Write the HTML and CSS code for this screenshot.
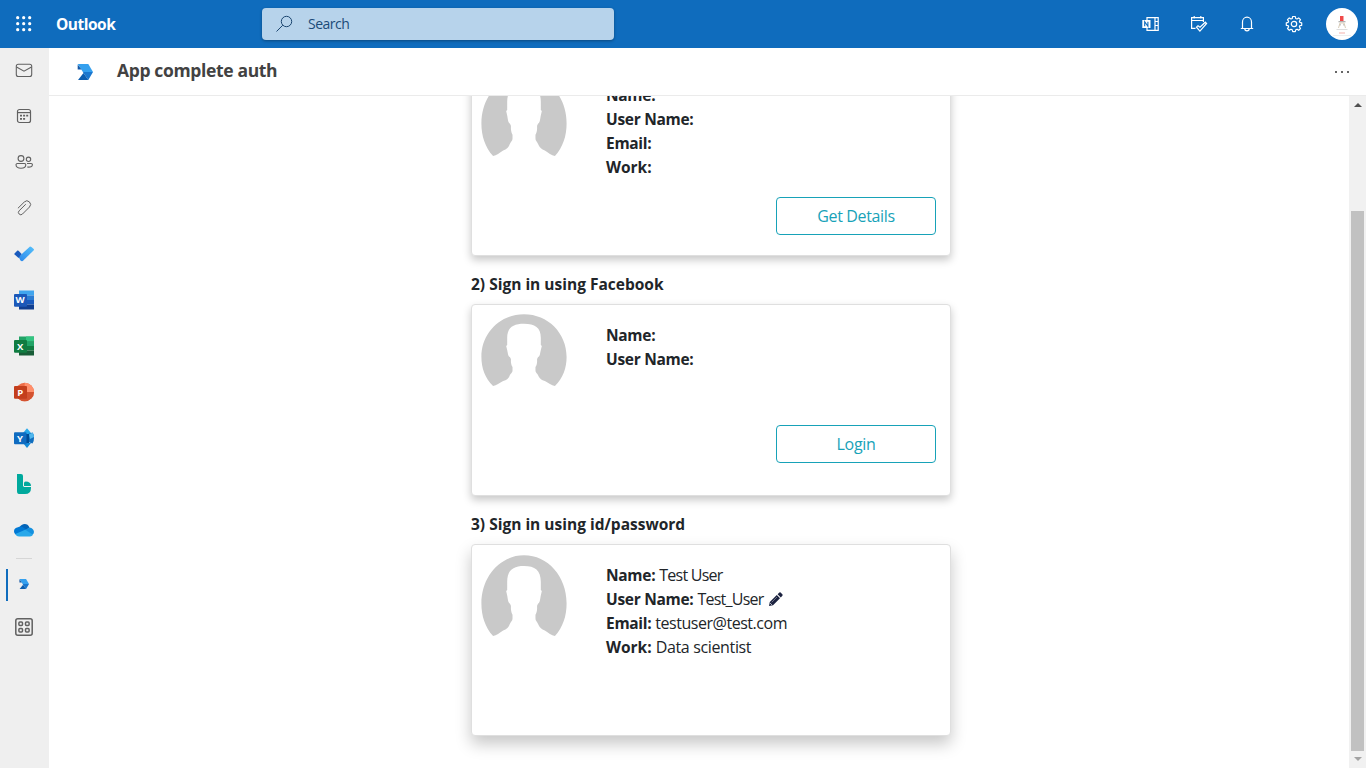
FILE: index.html
```html
<!DOCTYPE html>
<html lang="en">
<head>
<meta charset="utf-8">
<title>Outlook - App complete auth</title>
<link rel="stylesheet" href="styles.css">
</head>
<body>
<svg width="0" height="0" class="defs">
  <defs>
    <linearGradient id="todo" x1="0" y1="1" x2="1" y2="0"><stop offset="0" stop-color="#2b86ea"/><stop offset="1" stop-color="#56c1fb"/></linearGradient>
    <symbol id="avatar" viewBox="0 0 85.4 72" preserveAspectRatio="none">
      <path fill="#c9c9c9" d="M12 72C4 64 .4 54 .4 43C.4 19 19 .3 42.7 .3S85 19 85 43C85 54 81.4 64 73.4 72C70 71.4 67 69 63.4 67C60 66 58.500 64.500 57.400 62.700C56 59 54 59 54.100 56V53C55 52 55.500 50 55.700 48V45L56.700 43C58.500 43 58.700 39 59.400 36L60.400 32L59.400 31V24C59.400 13.500 53.500 9.800 42.700 9.800S26 13.500 26 24V31L25 32L26 36C26.700 39 27 43 28.700 43L29.700 45V48C30 50 30.400 52 31.300 53V56C31.400 59 29.400 59 28 62.700C27 64.500 25.500 66 22 67C18.400 69 15.400 71.400 12 72Z"/>
    </symbol>
    <symbol id="app" viewBox="0 0 16 16">
      <path fill="#35a0ee" d="M.7 0H11.300L16 8H6L4.300 5.500Z"/>
      <path fill="#1257a6" d="M.7 .5L4.500 5.400H.7Z"/>
      <path fill="#1b78cf" d="M4.300 5.400L6 8H16L11.300 16L6.500 9Z"/>
      <path fill="#0c5eb0" d="M6.500 9L11.300 16H1Z"/>
    </symbol>
  </defs>
</svg>
<header class="topbar">
  <svg class="waffle" width="16" height="16" viewBox="0 0 16 16" fill="#fff"><circle cx="1.700" cy="1.700" r="1.600"/><circle cx="7.700" cy="1.700" r="1.600"/><circle cx="13.700" cy="1.700" r="1.600"/><circle cx="1.700" cy="7.700" r="1.600"/><circle cx="7.700" cy="7.700" r="1.600"/><circle cx="13.700" cy="7.700" r="1.600"/><circle cx="1.700" cy="13.700" r="1.600"/><circle cx="7.700" cy="13.700" r="1.600"/><circle cx="13.700" cy="13.700" r="1.600"/></svg>
  <span class="brand">Outlook</span>
  <div class="search">
    <svg width="18" height="18" viewBox="0 0 18 18" fill="none" stroke="#1c4670" stroke-width="1"><circle cx="10.500" cy="6.500" r="5.200"/><path d="M6.800 10.200L.5 16.500"/></svg>
    <span>Search</span>
  </div>
  <nav class="tools">
    <svg width="18" height="16" viewBox="0 0 18 16"><path d="M5 4V1.600H16.200V14.400H5V12M13 2V14M13 5.500H16M13 9.500H16" fill="none" stroke="#fff" stroke-width="1.200"/><path fill="#fff" d="M.3 4H8.500V12H.3Z"/><path d="M2.700 10.300V5.700L5.900 10.300V5.700" stroke="#0f6cbd" stroke-width="1.100" fill="none"/></svg>
    <svg width="18" height="18" viewBox="0 0 18 18" fill="none" stroke="#fff" stroke-width="1.200"><path d="M5.500 13.400H1.600V2.600H13.400V7M1.600 5.500H13.400M4.200 1V3.500M10.800 1V3.500M6.500 12.200L8 10.700L10 12.300L15.300 7.200L16.600 8.500L9.900 16.200Z"/></svg>
    <svg width="16" height="18" viewBox="0 0 16 18" fill="none" stroke="#fff" stroke-width="1.200"><path d="M1.800 13.500H14.200M3.500 13.500V7A4.500 4.800 0 0 1 12.500 7V13.500M5.800 13.800A2.200 2 0 0 0 10.200 13.800"/></svg>
    <svg width="18" height="18" viewBox="0 0 18 18" fill="none" stroke="#fff" stroke-width="1.200" stroke-linejoin="round"><path d="M7.700 1.500H10.300L10.700 3.500L12 4L13.700 2.900L15.500 4.700L14.400 6.400L14.800 7.400L16.700 7.800V10.300L14.800 10.700L14.400 11.800L15.500 13.500L13.700 15.300L12 14.200L10.800 14.700L10.300 16.600H7.700L7.200 14.700L6 14.200L4.300 15.300L2.500 13.500L3.600 11.800L3.200 10.700L1.300 10.300V7.800L3.200 7.400L3.600 6.300L2.500 4.700L4.300 2.900L6 4L7.200 3.500Z"/><circle cx="9" cy="9" r="2.700"/></svg>
    <svg class="profile" width="32" height="32" viewBox="0 0 32 32"><circle cx="16" cy="16" r="16" fill="#fff"/><path fill="#f04a4a" d="M14 8H17.500V13H14Z"/><path fill="#999" d="M12.500 13.200H19.500V14.200H12.500ZM13.500 16H14.500V17.500H13.500ZM17.500 16H18.500V17.500H17.500Z"/><path stroke="#d9cdb9" fill="none" d="M12.500 20L14 15H18L19.500 20"/><path stroke="#ddd" d="M10.500 21.500H21.500"/><path stroke="#f8cbc7" stroke-width="1.500" d="M13 25H19"/><path stroke="#eee" d="M7 27.500H25"/></svg>
  </nav>
</header>
<div class="shell">
  <aside class="rail">
    <div class="item"><svg width="18" height="16" viewBox="0 0 18 16" fill="none" stroke="#616161" stroke-width="1.100"><rect x="1.300" y="1.300" width="15.400" height="12.200" rx="2"/><path d="M1.500 4L9 8.200L16.500 4"/></svg></div>
    <div class="item"><svg width="16" height="16" viewBox="0 0 16 16" fill="none" stroke="#616161" stroke-width="1.200"><rect x="1.500" y="1.500" width="13" height="13" rx="2"/><path d="M1.500 4.600H14.500"/><path stroke-width="1.800" d="M4 7.700H6M7.100 7.700H9.100M10.200 7.700H12.200M4 10.800H6M7.100 10.800H9.100"/></svg></div>
    <div class="item"><svg width="20" height="16" viewBox="0 0 20 16" fill="none" stroke="#616161" stroke-width="1.100"><circle cx="7" cy="4.500" r="2.900"/><circle cx="14.500" cy="5.300" r="2.200"/><path d="M3.500 9.500H10.500A1.300 1.300 0 0 1 11.800 10.800C11.800 13 10 14.300 7 14.300S2 13 2 10.800A1.300 1.300 0 0 1 3.500 9.500ZM13 9.500H17.200A1.200 1.200 0 0 1 18.400 10.700C18.400 12.500 16.500 13.500 13.200 13"/></svg></div>
    <div class="item"><svg width="16" height="16" viewBox="0 0 16 16" fill="none" stroke="#616161" stroke-width="1" stroke-linecap="round"><path d="M2.200 8L8.300 2A3.600 3.600 0 0 1 13.500 7L6.500 14A2.300 2.300 0 0 1 3.100 10.800L9.500 4.500"/></svg></div>
    <div class="item"><svg width="20" height="16" viewBox="0 0 20 16"><path fill="url(#todo)" d="M4.600 11L16 .6Q17 .2 20 3.300Q20 4 19.500 4.500L8.800 15Q7.500 15.500 6.500 14.500Z"/><path fill="#195abd" d="M.5 7.400L3.400 4.500Q4 4.200 4.500 4.700L7.700 8L4.600 12L.6 8.500Q.1 8 .5 7.400Z"/></svg></div>
    <div class="item"><svg width="20" height="20" viewBox="0 0 20 20"><path fill="#41a5ee" d="M5 .5H20V5.500H5Z"/><path fill="#2b7cd3" d="M5 5.500H20V10H5Z"/><path fill="#185abd" d="M5 10H20V14.500H5Z"/><path fill="#103f91" d="M5 14.500H20V19.500H5Z"/><rect y="4" width="13" height="12.700" rx="1" fill="#1b58b8"/><text x="6.200" y="13.400" class="tile">W</text></svg></div>
    <div class="item"><svg width="20" height="20" viewBox="0 0 20 20"><path fill="#21a366" d="M5 .5H20V5.500H5Z"/><path fill="#33c481" d="M12 .5H20V5.500H12Z"/><path fill="#107c41" d="M5 5.500H20V14.500H5Z"/><path fill="#21a366" d="M12 5.500H20V10H12Z"/><path fill="#185c37" d="M5 14.500H20V19.500H5Z"/><rect y="4" width="13" height="12.700" rx="1" fill="#107c41"/><text x="6.200" y="13.600" class="tile">X</text></svg></div>
    <div class="item"><svg width="20" height="20" viewBox="0 0 20 20"><circle cx="10.700" cy="10" r="9.300" fill="#ed6c47"/><path fill="#ff8f6b" d="M10.700 .7A9.300 9.300 0 0 1 20 10H10.700Z"/><path fill="#d35230" d="M1.400 10H20A9.300 9.300 0 0 1 1.400 10Z"/><rect y="4" width="13" height="12.700" rx="1" fill="#c43e1c"/><text x="6.200" y="13.600" class="tile">P</text></svg></div>
    <div class="item"><svg width="20" height="20" viewBox="0 0 20 20"><path fill="#28a8ea" d="M9 5L13 .2L17 5L16 10H9Z"/><path fill="#106ebe" d="M14 6L18.500 4.500Q20 6 20 10T18.500 15.500L14 14Z"/><path fill="#50b7ed" d="M15 6.500L18.500 4.500Q20 6 20 9L16 11Z"/><path fill="#004b94" d="M10 6H15V15H10Z"/><path fill="#1489d8" d="M9 15H17L13 20Z"/><rect y="4.200" width="12.500" height="12" rx="1" fill="#0f6bc0"/><text x="6" y="13.500" class="tile">Y</text></svg></div>
    <div class="item"><svg width="16" height="20" viewBox="0 0 16 20"><path fill="#00a99d" d="M1 0H5Q7 0 7 2V12H1Z"/><path fill="#00a99d" d="M8 12V9Q8 7.400 9.600 7.400Q15 7.400 15 12Z"/><path fill="#00a99d" d="M1 12H7.500V13H15V14Q15 20 9 20H3Q1 20 1 17Z"/></svg></div>
    <div class="item"><svg width="20" height="14" viewBox="0 0 20 14"><path fill="#0364b8" d="M5.500 4.500C7 .6 13.500-1 15.500 4.600L11 8Z"/><path fill="#0078d4" d="M3 12Q0 11 0 8Q.3 4.700 4 4.200Q7 2.500 10 5L14 8Z"/><path fill="#1490df" d="M9 8L15.500 4.500Q19.500 5 20 9Q20 11 18 12Z"/><path fill="#28a8ea" d="M1.300 11L11.300 6.800L19 11.700Q18 13.500 16 13.500H5Q2.500 13.500 1.300 11Z"/></svg></div>
    <div class="divider"></div>
    <div class="item active"><svg width="10" height="10"><use href="#app"/></svg></div>
    <div class="item last"><svg width="18" height="18" viewBox="0 0 18 18" fill="none" stroke="#616161" stroke-width="1.500"><rect x=".8" y=".8" width="16.400" height="16.400" rx="2"/><rect x="3.900" y="3.900" width="3.600" height="3.600" rx="1"/><rect x="10.500" y="3.900" width="3.600" height="3.600" rx="1"/><rect x="3.900" y="10.500" width="3.600" height="3.600" rx="1"/><rect x="10.500" y="10.500" width="3.600" height="3.600" rx="1"/></svg></div>
  </aside>
  <main class="main">
    <div class="apphead">
      <svg width="16" height="16"><use href="#app"/></svg>
      <h1>App complete auth</h1>
      <svg class="more" width="14" height="2" fill="#666"><path d="M0 0H2V2H0ZM6 0H8V2H6ZM12 0H14V2H12Z"/></svg>
    </div>
    <div class="viewport">
      <div class="content">
        <div class="card">
          <svg class="avatar tall"><use href="#avatar"/></svg>
          <div class="details">
            <p><b>Name:</b></p><p><b>User Name:</b></p><p><b>Email:</b></p><p><b class="work">Work:</b></p>
          </div>
          <button class="btn get">Get Details</button>
        </div>
        <h2>2) Sign in using Facebook</h2>
        <div class="card">
          <svg class="avatar"><use href="#avatar"/></svg>
          <div class="details">
            <p><b>Name:</b></p><p><b>User Name:</b></p>
          </div>
          <button class="btn">Login</button>
        </div>
        <h2>3) Sign in using id/password</h2>
        <div class="card raised">
          <svg class="avatar tall"><use href="#avatar"/></svg>
          <div class="details">
            <p><b>Name:</b><span class="tight">Test User</span></p>
            <p><b>User Name:</b><span class="tight">Test_User</span><svg class="pencil" width="14" height="14" viewBox="0 0 14 14"><path fill="#1c2340" d="M0 14L.8 10L7.800 3L11 6.200L4 13.200ZM8.600 2.200L10.400 .5Q11 0 11.600 .5L13.500 2.400Q14 3 13.500 3.600L11.800 5.400Z"/><path d="M2.700 10.300L8 5" stroke="#aab" stroke-width=".6"/><path d="M1.200 11.200L2.800 12.800" stroke="#fff" stroke-width=".8"/></svg></p>
            <p><b>Email:</b><span class="mail">testuser@test.com</span></p>
            <p><b class="work">Work:</b><span>Data scientist</span></p>
          </div>
        </div>
      </div>
      <div class="scroll">
        <svg width="8" height="4"><path fill="#505050" d="M0 4L4 0L8 4Z"/></svg>
        <div class="thumb"></div>
        <svg width="8" height="4"><path fill="#a3a3a3" d="M0 0H8L4 4Z"/></svg>
      </div>
    </div>
  </main>
</div>
</body>
</html>
```
FILE: styles.css
```css
* { box-sizing: border-box; }
body { margin: 0; height: 768px; overflow: hidden; display: flex; flex-direction: column; font-family: "Open Sans", "Noto Sans", sans-serif; color: #212529; background: #fff; }
svg { display: block; flex: none; }
.defs { position: absolute; }
.topbar { height: 48px; flex: none; background: #0f6cbd; display: flex; align-items: center; padding: 0 8px 0 16px; }
.brand { width: 206px; margin-left: 24px; color: #fff; font-size: 15.500px; font-weight: 700; letter-spacing: -.5px; }
.search { width: 352px; height: 32px; background: #b7d3eb; border-radius: 4px; display: flex; align-items: center; gap: 14px; padding-left: 14px; color: #1b4b78; font-size: 14px; letter-spacing: -.5px; box-shadow: 0 1px 3px #0005; }
.search span { margin-top: -1px; }
.tools { margin-left: auto; display: flex; align-items: center; gap: 30.500px; }
.tools .profile { margin-left: -7.500px; }
.shell { flex: 1; display: flex; min-height: 0; }
.rail { width: 49px; flex: none; background: #efefef; display: flex; flex-direction: column; }
.item { height: 46px; flex: none; display: flex; align-items: center; justify-content: center; padding-right: 1px; }
.rail > .item:first-child { height: 45px; }
.tile { fill: #fff; font-size: 9.500px; font-weight: 700; text-anchor: middle; }
.divider { width: 16px; height: 1px; margin: 5px 0 10px 16px; background: #d6d6d6; }
.item.active { height: 32px; margin-left: 6px; padding: 0 9px 2px 0; border-left: 2px solid #0f6cbd; }
.item.last { margin-top: 3px; }
.main { flex: 1; min-width: 0; display: flex; flex-direction: column; }
.apphead { height: 48px; flex: none; border-bottom: 1px solid #ebebeb; display: flex; align-items: center; padding: 0 17px 0 28px; }
h1 { margin: 0 0 4px 24px; font-size: 17.500px; font-weight: 700; color: #424242; letter-spacing: -.35px; line-height: 24px; white-space: nowrap; }
.more { margin-left: auto; }
.viewport { flex: 1; min-height: 0; display: flex; overflow: hidden; }
.content { width: 480px; margin: -32px auto 0 422px; }
.card { height: 192px; border: 1px solid #dfdfdf; border-radius: 4px; background: #fff; display: grid; grid-template-columns: 125px 1fr; grid-template-rows: 120px 1fr; padding: 0 14px 0 9px; box-shadow: 0 4px 8px rgba(0,0,0,.22); }
.card.raised { box-shadow: 0 8px 16px rgba(0,0,0,.22); }
.avatar { width: 86px; height: 72px; margin-top: 9px; }
.avatar.tall { height: 81px; margin-top: 10px; }
.details { padding-top: 18px; font-size: 16px; line-height: 24px; }
p { margin: 0; height: 24px; display: flex; align-items: center; white-space: nowrap; letter-spacing: -.35px; }
b { font-weight: 700; margin-right: 4px; font-size: 15.500px; letter-spacing: -.3px; }
.work { letter-spacing: 0; }
.tight { letter-spacing: -.75px; }
.mail { letter-spacing: -.47px; }
.btn { grid-column: 2; justify-self: end; width: 160px; height: 38px; border: 1px solid #17a2b8; border-radius: 4px; background: #fff; color: #17a2b8; font: 16px/24px "Open Sans", "Noto Sans", sans-serif; padding: 0; letter-spacing: -.35px; }
.get { margin-top: 0; }
.pencil { margin-left: 5px; }
h2 { margin: 16px 0 8px; font-size: 15.500px; line-height: 24px; font-weight: 700; letter-spacing: 0; white-space: nowrap; }
.scroll { width: 17px; background: #f1f1f1; display: flex; flex-direction: column; align-items: center; padding: 7px 0; }
.thumb { width: 13px; height: 540px; margin: 104px 0 6px; background: #c1c1c1; }
.get { margin-top: 12px; }
```
